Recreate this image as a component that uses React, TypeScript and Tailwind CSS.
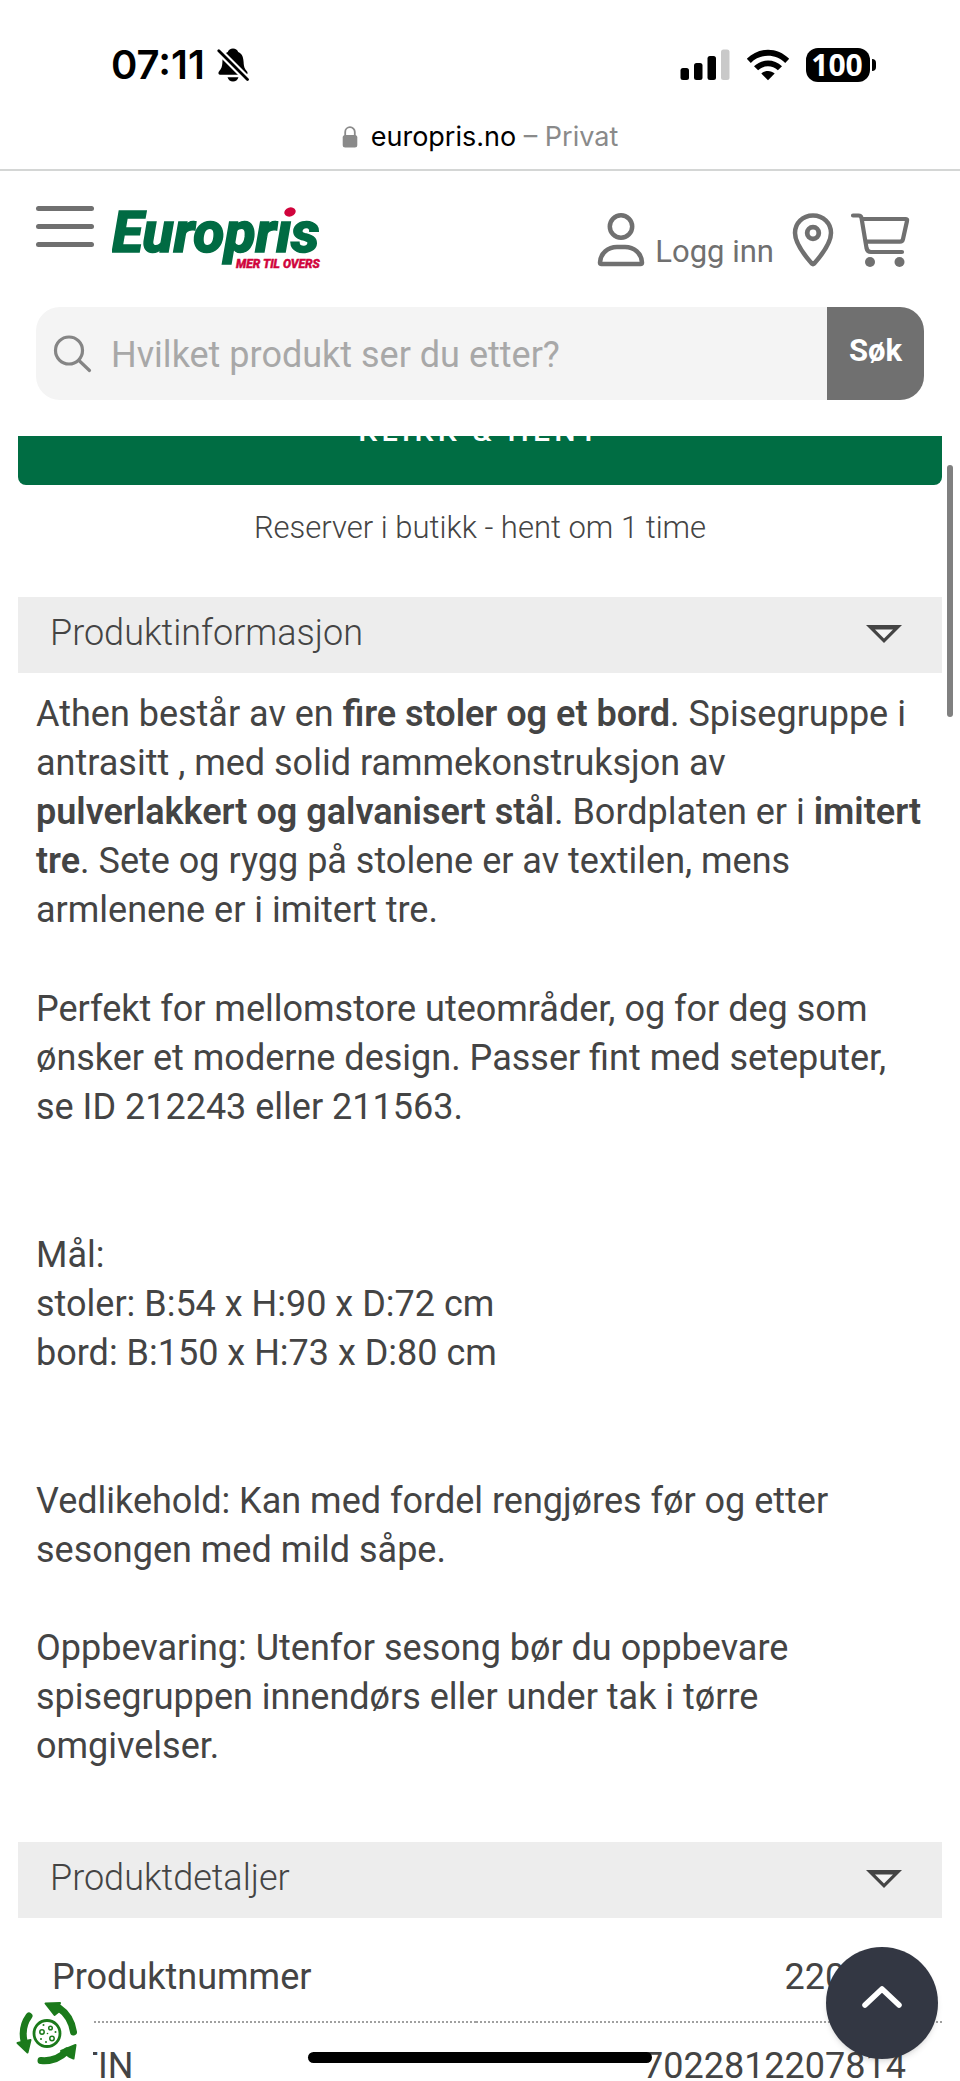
import { useState, type ReactNode } from "react";

const details = [
  { label: "Produktnummer", value: "220781" },
  { label: "GTIN", value: "7022812207814" },
];

function StatusBar() {
  return (
    <div className="flex h-[97px] items-center justify-between pl-[111px] pr-[84px] pt-8">
      <div className="flex items-center gap-3">
        <span className="font-[Inter,sans-serif] text-[40px] leading-none font-semibold">07:11</span>
        <svg width="32" height="34" viewBox="0 0 32 34" role="img" aria-label="Lydløs">
          <path
            d="M16 0.5c2.6 0 4.400 1.400 5.200 3.400 4.200 1.800 5.200 5.600 5.400 10.200.2 5 1.200 7 3.200 9.100 1.400 1.600.8 3.600-1.600 3.600H3.800C1.400 26.800.8 24.800 2.200 23.200c2-2.100 3-4.100 3.200-9.100C5.600 9.500 6.600 5.700 10.800 3.900 11.600 1.900 13.400.5 16 .5Z"
          />
          <path d="M10.500 29.200h11c-.8 2.700-2.900 4.300-5.500 4.300s-4.700-1.600-5.500-4.300Z" />
          <path d="M1.500 2.500 30.500 31.500" stroke="white" strokeWidth="7" />
          <path d="M1.800 2.800 30.500 31.500" stroke="black" strokeWidth="2.800" strokeLinecap="round" />
        </svg>
      </div>
      <div className="flex items-center gap-4">
        <svg width="50" height="32" viewBox="0 0 50 32" role="img" aria-label="Signal">
          <rect x="0.500" y="19" width="8.500" height="12" rx="2.500" />
          <rect x="14" y="14" width="8.500" height="17" rx="2.500" />
          <rect x="27.500" y="7" width="8.500" height="24" rx="2.500" />
          <rect x="41" y="0.500" width="8.500" height="30.500" rx="2.500" fill="#c9c9c9" />
        </svg>
        <svg width="44" height="32" viewBox="0 0 44 32" role="img" aria-label="Wi-Fi">
          <path d="M.8 9.800C12.600-2.400 31.400-2.400 43.200 9.800l-4 4.100C29.700 4.400 14.300 4.400 4.800 13.900Z" />
          <path d="M8 17.200c7.800-7.600 20.200-7.600 28 0l-4.100 4.100c-5.500-5.300-14.300-5.300-19.800 0Z" />
          <path d="M15.300 24.500c3.800-3.400 9.600-3.400 13.400 0L22 31.200Z" />
        </svg>
        <div className="flex items-center gap-[2px]">
          <span className="flex h-[34px] w-16 items-center justify-center rounded-xl bg-black pr-[2px] font-['Open_Sans',sans-serif] text-[30px] leading-none font-bold text-white">
            100
          </span>
          <span className="h-3 w-1 rounded-r-full bg-black" />
        </div>
      </div>
    </div>
  );
}

function AddressBar() {
  return (
    <div className="flex h-[74px] items-center justify-center gap-[13px] border-b-2 border-[#d4d6d5] pt-2 font-[Inter,sans-serif] text-[27px] leading-8">
      <svg width="16" height="22" viewBox="0 0 16 22" fill="none" aria-hidden="true">
        <path d="M3.200 10V6a4.800 4.800 0 0 1 9.600 0v4" stroke="#8a8a8a" strokeWidth="1.800" />
        <rect x="0.700" y="9" width="14.600" height="12.500" rx="2.500" fill="#8a8a8a" />
      </svg>
      <p className="text-[#8a8a8a]">
        <span className="text-black">europris.no</span> – Privat
      </p>
    </div>
  );
}

function Logo() {
  return (
    <svg width="214" height="66" viewBox="0 0 214 66" role="img" aria-label="Europris">
      <text
        x="0"
        y="45"
        fill="#006b43"
        stroke="#006b43"
        strokeWidth="1.500"
        className="font-[Roboto,sans-serif] text-[57px] font-extrabold italic"
      >
        Europris
      </text>
      <path d="M169 -2h18l-4 14h-18Z" fill="white" />
      <ellipse cx="178" cy="5" rx="5.800" ry="4.500" fill="#d0043c" transform="rotate(-18 178 5)" />
      <text
        x="124"
        y="61"
        fill="#d0043c"
        stroke="#d0043c"
        strokeWidth="0.500"
        className="font-[Roboto,sans-serif] text-[12px] font-extrabold italic"
      >
        MER TIL OVERS
      </text>
    </svg>
  );
}

function Header() {
  return (
    <header className="px-9 pt-[34px] pb-9">
      <div className="flex h-[102px] items-start">
        <button aria-label="Meny" className="flex w-[58px] flex-col gap-[13px] pt-[1px]">
          <span className="h-[5px] w-full rounded-full bg-[#707070]" />
          <span className="h-[5px] w-full rounded-full bg-[#707070]" />
          <span className="h-[5px] w-full rounded-full bg-[#707070]" />
        </button>
        <a href="#" className="ml-[18px] pt-[2px]">
          <Logo />
        </a>
        <nav className="ml-auto flex items-start pt-2 pr-[14px] text-[#707070]">
          <a href="#" className="flex items-end gap-[10px]">
            <svg width="48" height="54" viewBox="0 0 48 54" fill="none" stroke="currentColor" strokeWidth="4.500" aria-hidden="true">
              <circle cx="24" cy="13.500" r="11.200" />
              <path d="M3 49.500C3.500 40 11 34 20 34h8c9 0 16.500 6 17 15.500a1.500 1.500 0 0 1-1.500 1.500h-39A1.500 1.500 0 0 1 3 49.500Z" />
            </svg>
            <span className="-mb-[6px] text-[31px] leading-[42px]">Logg inn</span>
          </a>
          <a href="#" aria-label="Finn butikk" className="ml-[18px]">
            <svg width="42" height="54" viewBox="0 0 42 54" fill="none" stroke="currentColor" aria-hidden="true">
              <path
                d="M21 2.500C10.500 2.500 3 10.500 3 20c0 9.500 7.500 20 17 30.800a1.400 1.400 0 0 0 2 0C31.500 40 39 29.500 39 20 39 10.500 31.500 2.500 21 2.500Z"
                strokeWidth="4.500"
              />
              <circle cx="21" cy="20" r="5.800" strokeWidth="4.800" />
            </svg>
          </a>
          <a href="#" aria-label="Handlekurv" className="ml-4">
            <svg width="60" height="54" viewBox="0 0 60 54" fill="none" stroke="currentColor" strokeWidth="4.200" strokeLinecap="round" strokeLinejoin="round" aria-hidden="true">
              <path d="M3 2.500h5.500q2.500 0 3 2.500l5 30q.8 4 4.500 4h31" />
              <path d="M12 6h44q1.500 0 1 2l-4 18q-.6 2.700-3 2.700H17" />
              <circle cx="20" cy="49" r="5" fill="currentColor" stroke="none" />
              <circle cx="49.500" cy="49" r="5" fill="currentColor" stroke="none" />
            </svg>
          </a>
        </nav>
      </div>

      <form className="flex h-[93px] overflow-hidden rounded-3xl bg-[#f4f4f4]" onSubmit={e => e.preventDefault()}>
        <label htmlFor="search" className="flex items-center pl-[17px]" aria-label="Søk etter produkt">
          <svg width="40" height="40" viewBox="0 0 40 40" fill="none" stroke="#858585" strokeWidth="3.200" strokeLinecap="round" aria-hidden="true">
            <circle cx="16" cy="16.500" r="13.500" />
            <path d="m26 26.500 10.500 10" />
          </svg>
        </label>
        <input
          id="search"
          type="search"
          placeholder="Hvilket produkt ser du etter?"
          className="min-w-0 flex-1 bg-transparent pt-[2px] pl-[18px] text-[36px] text-[#444] outline-none placeholder:text-[#a8a8a8]"
        />
        <button className="w-[97px] bg-[#707070] pb-1 text-[31px] font-bold text-white">Søk</button>
      </form>
    </header>
  );
}

function Section({ title, children }: { title: string; children: ReactNode }) {
  const [open, setOpen] = useState(true);

  return (
    <section>
      <h2>
        <button
          onClick={() => setOpen(o => !o)}
          aria-expanded={open}
          className="flex h-[76px] w-full items-center justify-between bg-[#ededed] pr-10 pb-[3px] pl-8 text-[36px] leading-[49px] font-light"
        >
          {title}
          <svg width="36" height="18" viewBox="0 0 36 18" aria-hidden="true">
            <path d="M0 0h36L18 18Z" fill="#444" />
            <path d="M9 4.500h18l-9 9Z" fill="#f4f4f4" />
          </svg>
        </button>
      </h2>
      {open && children}
    </section>
  );
}

function ProductPage() {
  return (
    <div className="-mt-[60px] px-[18px]">
      <button className="h-[109px] w-full rounded-lg bg-[#006d43] text-[30px] font-medium tracking-[0.14em] text-white">
        KLIKK &amp; HENT
      </button>
      <p className="pt-[22px] pb-[48px] text-center text-[31px] leading-[42px] font-light">
        Reserver i butikk - hent om 1 time
      </p>

      <Section title="Produktinformasjon">
        <div className="px-[18px] pt-[17px] pb-[71px] text-[36px] leading-[49px]">
          <p>
            Athen består av en <b className="font-semibold">fire stoler og et bord</b>. Spisegruppe i antrasitt , med
            solid rammekonstruksjon av <b className="font-semibold">pulverlakkert og galvanisert stål</b>. Bordplaten er
            i <b className="font-semibold">imitert tre</b>. Sete og rygg på stolene er av textilen, mens armlenene er i
            imitert tre.
          </p>
          <p className="pt-[50px]">
            Perfekt for mellomstore uteområder, og for deg som ønsker et moderne design. Passer fint med seteputer, se
            ID 212243 eller 211563.
          </p>
          <p className="pt-[99px]">
            Mål:
            <br />
            stoler: B:54 x H:90 x D:72 cm
            <br />
            bord: B:150 x H:73 x D:80 cm
          </p>
          <p className="pt-[99px]">Vedlikehold: Kan med fordel rengjøres før og etter sesongen med mild såpe.</p>
          <p className="pt-[49px]">
            Oppbevaring: Utenfor sesong bør du oppbevare spisegruppen innendørs eller under tak i tørre omgivelser.
          </p>
        </div>
      </Section>

      <Section title="Produktdetaljer">
        <table className="mt-4 w-full text-[36px] leading-[49px]">
          <tbody>
            {details.map(d => (
              <tr key={d.label} className="border-b-2 border-dotted border-[#a0a0a0]">
                <th scope="row" className="py-[19px] pl-[34px] text-left font-normal">
                  {d.label}
                </th>
                <td className="py-[19px] pr-9 text-right">{d.value}</td>
              </tr>
            ))}
          </tbody>
        </table>
      </Section>
    </div>
  );
}

function CookieBadge() {
  return (
    <button aria-label="Informasjonskapsler" className="absolute bottom-0 left-0 h-[92px] w-[93px] bg-white">
      <svg width="93" height="92" viewBox="0 0 93 92" fill="none" stroke="#1b7a1b" aria-hidden="true">
        <g strokeWidth="7" strokeLinecap="round">
          <path d="M59 19Q71 27 73.500 43" />
          <path d="M29 27Q21 38 24 52" />
          <path d="M41 71.500Q56 73 67 62" />
        </g>
        <g fill="#1b7a1b" strokeWidth="2" strokeLinejoin="round">
          <path d="M45.500 14.500 60 14 58.500 17 62 20 54.500 26Z" />
          <path d="M17.500 54 30.500 51 27.500 63.500Z" />
          <path d="M61 62 75.500 56 73.500 69.500 69 67.500Z" />
        </g>
        <circle cx="47" cy="44.500" r="13" strokeWidth="2.800" />
        <g strokeWidth="1.500">
          <circle cx="42" cy="43" r="2.200" />
          <circle cx="50.500" cy="39" r="1.800" />
          <circle cx="52" cy="49.500" r="2.200" />
        </g>
        <g fill="#1b7a1b" stroke="none">
          <circle cx="43.500" cy="36" r="1" />
          <circle cx="55.500" cy="43" r="1" />
          <circle cx="47.500" cy="44.500" r="0.800" />
          <circle cx="41" cy="50" r="1" />
          <circle cx="46" cy="53" r="1" />
        </g>
      </svg>
    </button>
  );
}

export default function App() {
  return (
    <div className="relative flex h-screen flex-col overflow-hidden bg-white font-[Roboto,sans-serif] text-[#444]">
      <div className="text-black">
        <StatusBar />
        <AddressBar />
      </div>
      <Header />
      <main className="relative min-h-0 flex-1 overflow-hidden">
        <ProductPage />
        <div className="absolute top-[29px] right-[7px] h-[252px] w-[6px] rounded-full bg-[#808080]" />
      </main>

      <CookieBadge />
      <button
        aria-label="Til toppen"
        className="absolute right-[22px] bottom-[22px] flex size-28 items-center justify-center rounded-full bg-[#333743] pb-3 shadow-md"
      >
        <svg width="42" height="24" viewBox="0 0 42 24" fill="none" stroke="white" strokeWidth="5.500" strokeLinecap="round" strokeLinejoin="round" aria-hidden="true">
          <path d="M4 20 21 4l17 16" />
        </svg>
      </button>
      <div className="absolute bottom-[18px] left-1/2 h-[11px] w-[344px] -translate-x-1/2 rounded-full bg-black" />
    </div>
  );
}
